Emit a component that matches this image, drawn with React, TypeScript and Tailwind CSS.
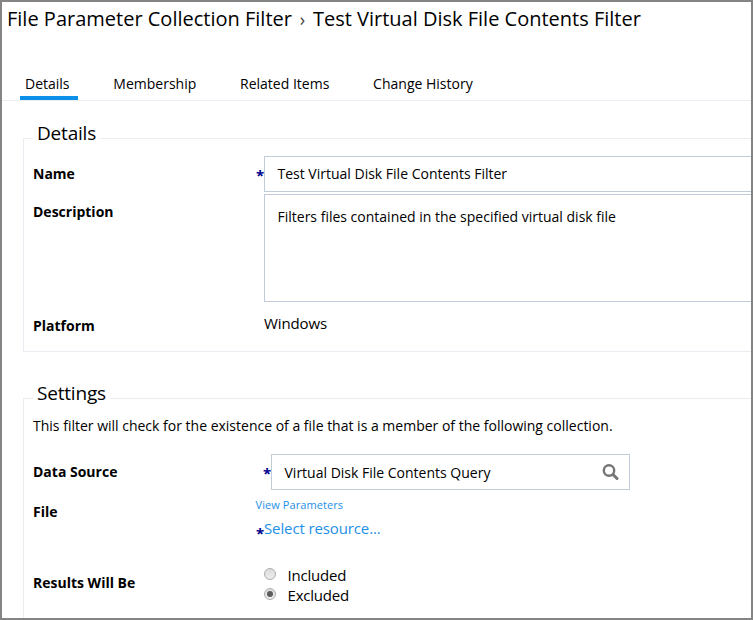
import type { ReactNode } from "react";

function Label({ children, className = "" }: { children: ReactNode; className?: string }) {
  return (
    <div className={`w-[222px] shrink-0 text-[14px] leading-5 font-bold ${className}`}>{children}</div>
  );
}

function Star({ className = "" }: { className?: string }) {
  return (
    <span className={`w-[9px] shrink-0 pl-px text-[15px] leading-5 font-bold text-[#00008b] ${className}`}>*</span>
  );
}

function Tab({ children, active = false }: { children: ReactNode; active?: boolean }) {
  return (
    <div
      className={`flex h-[28px] items-center border-b-4 pr-2 pb-0.5 pl-[5px] text-[14px] whitespace-nowrap ${
        active ? "border-[#0b90e8]" : "border-transparent"
      }`}
    >
      {children}
    </div>
  );
}

function Radio({ label, checked = false }: { label: string; checked?: boolean }) {
  return (
    <div className="flex h-5 items-start">
      <span className="flex size-3 items-center justify-center rounded-full border border-[#adadad] bg-linear-to-b from-[#dcdcdc] to-[#eeeeee]">
        {checked && <span className="size-1.5 rounded-full bg-[#5c5c5c]" />}
      </span>
      <span className="-mt-[3px] ml-[11.5px] text-[15px] leading-5 tracking-[-0.2px]">{label}</span>
    </div>
  );
}

export default function App() {
  return (
    <div className="h-[620px] w-[753px] overflow-hidden border-2 border-[#848484] bg-white font-['Open_Sans',sans-serif] text-black">
      <h1 className="flex h-[34px] items-center pl-[5px] text-[20px] whitespace-nowrap">
        <span>File Parameter Collection Filter</span>
        <span className="w-[21px] text-center text-[18px] text-[#444]">›</span>
        <span>Test Virtual Disk File Contents Filter</span>
      </h1>

      <nav className="mt-9 flex gap-[30.8px] pl-[18px]">
        <Tab active>Details</Tab>
        <Tab>Membership</Tab>
        <Tab>Related Items</Tab>
        <Tab>Change History</Tab>
      </nav>
      <div className="h-px bg-[#e9eff5]" />

      <fieldset className="mt-[23px] ml-[21px] h-[228px] border border-r-0 border-[#e9edf1]">
        <legend className="ml-[9px] h-7 px-1 text-[19px] leading-[18px] tracking-[-0.2px]">Details</legend>
        <div className="pt-1 pl-[9px]">
          <div className="flex">
            <Label className="mt-2">Name</Label>
            <Star className="mt-[9px]" />
            <div className="flex h-9 flex-1 items-center border border-r-0 border-[#c0ccd8] pb-0.5 pl-[12.5px] text-[14px]">
              Test Virtual Disk File Contents Filter
            </div>
          </div>
          <div className="mt-0.5 flex">
            <Label className="mt-2">Description</Label>
            <div className="ml-[9px] h-[108px] flex-1 border border-r-0 border-[#c0ccd8] pt-3 pl-[12.5px] text-[14px] leading-5">
              Filters files contained in the specified virtual disk file
            </div>
          </div>
          <div className="mt-[11px] flex">
            <Label className="mt-[3px]">Platform</Label>
            <div className="ml-[9px] text-[15px] leading-5 tracking-[-0.1px]">Windows</div>
          </div>
        </div>
      </fieldset>

      <fieldset className="mt-8 ml-[21px] h-[260px] border border-r-0 border-[#ececee]">
        <legend className="ml-[9px] h-7 px-1 text-[19px] leading-[18px] tracking-[-0.2px]">Settings</legend>
        <div className="pt-1 pl-[9px]">
          <p className="text-[14px] leading-5">
            This filter will check for the existence of a file that is a member of the following collection.
          </p>
          <div className="mt-[18px] flex">
            <Label className="mt-2">Data Source</Label>
            <Star className="mt-[9px] ml-[7px]" />
            <div className="flex h-9 w-[359px] items-center justify-between border border-[#c0ccd8] pr-[10px] pl-[12.5px] text-[14px]">
              <span>Virtual Disk File Contents Query</span>
              <svg width="17" height="17" viewBox="0 0 17 17" fill="none" stroke="#757575">
                <circle cx="7" cy="6.5" r="5.2" strokeWidth="2.4" />
                <path d="M11 10.5l4 4" strokeWidth="3" strokeLinecap="round" />
              </svg>
            </div>
          </div>
          <div className="mt-1 flex text-[#1e90e6]">
            <Label className="mt-2 text-black">File</Label>
            <div>
              <div className="pl-[0.5px] text-[11px] leading-[22px] tracking-[0.08px]">View Parameters</div>
              <div className="flex h-6 text-[15px] leading-6 tracking-[-0.12px]">
                <Star className="mt-[7px]" />
                <span>Select resource...</span>
              </div>
            </div>
          </div>
          <div className="mt-[27px] flex">
            <Label className="mt-[6px]">Results Will Be</Label>
            <div className="mt-px ml-[9px]">
              <Radio label="Included" />
              <Radio label="Excluded" checked />
            </div>
          </div>
        </div>
      </fieldset>
    </div>
  );
}
